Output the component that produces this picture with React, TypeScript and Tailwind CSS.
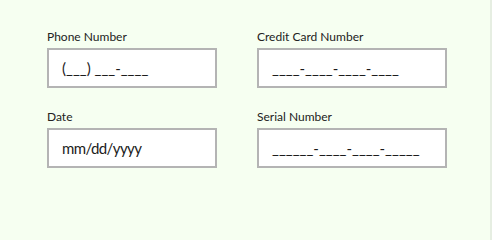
import React from "react";

const fields = [
  { label: "Phone Number", mask: "(___) ___-____", width: "w-[170px]", tight: false },
  { label: "Credit Card Number", mask: "____-____-____-____", width: "w-[190px]", tight: false },
  { label: "Date", mask: "mm/dd/yyyy", width: "w-[170px]", tight: true },
  { label: "Serial Number", mask: "______-____-____-_____", width: "w-[190px]", tight: false },
];

function MaskField({ label, mask, width, tight }: { label: string; mask: string; width: string; tight: boolean }) {
  return (
    <div className="flex flex-col">
      <label className="text-[12px] leading-[15px] text-[#222] mb-[4px]">{label}</label>
      <div
        className={`${width} h-[40px] border-2 border-[#b4b4b4] bg-white flex items-center pl-[13px] text-[15px] text-[#1c1c1c] ${tight ? "tracking-[-0.6px]" : ""}`}
      >
        {mask}
      </div>
    </div>
  );
}

export default function App() {
  return (
    <div
      className="w-full min-h-screen bg-[#f6fff1] border-r-2 border-[#e6eee2] pt-[29px] pl-[47px]"
      style={{ fontFamily: "Lato, 'Noto Sans', sans-serif" }}
    >
      <div className="grid grid-cols-[170px_190px] gap-x-[40px] gap-y-[21px]">
        {fields.map((f) => (
          <MaskField key={f.label} {...f} />
        ))}
      </div>
    </div>
  );
}
